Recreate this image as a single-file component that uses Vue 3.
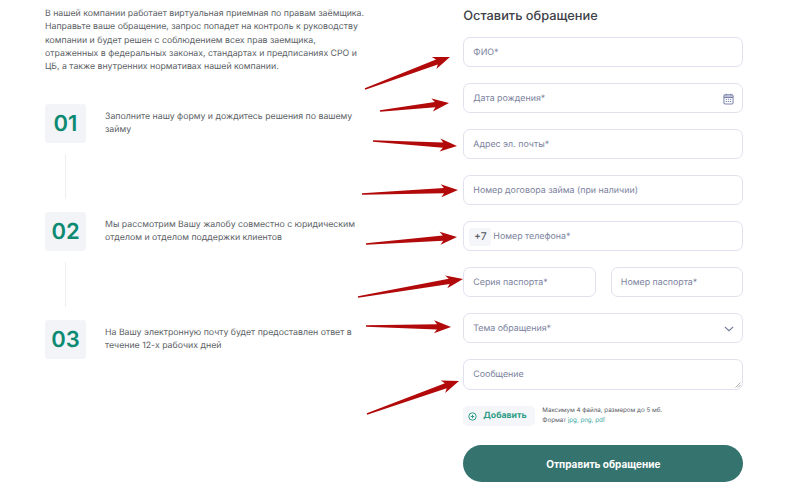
<script setup>
const steps = [
  { n: '01', text: 'Заполните нашу форму и дождитесь решения по вашему займу' },
  { n: '02', text: 'Мы рассмотрим Вашу жалобу совместно с юридическим отделом и отделом поддержки клиентов' },
  { n: '03', text: 'На Вашу электронную почту будет предоставлен ответ в течение 12-х рабочих дней' },
]
const lines = [
  [365, 89, 450, 57], [380, 111, 449, 103], [373, 141, 457, 146], [362, 194, 458, 190],
  [366, 244, 457, 237], [358, 297, 463, 279], [366, 326, 451, 327], [367, 414, 459, 381],
]
function arrow([x1, y1, x2, y2]) {
  const dx = x2 - x1, dy = y2 - y1, l = Math.hypot(dx, dy)
  const ux = dx / l, uy = dy / l, nx = -uy, ny = ux
  const at = (d, w) => `${(x1 + ux * d + nx * w).toFixed(1)},${(y1 + uy * d + ny * w).toFixed(1)}`
  const h = l - 14
  return [at(0, 0.7), at(h, 2.6), at(l - 17, 6.5), at(l, 0), at(l - 17, -6.5), at(h, -2.6), at(0, -0.7)].join(' ')
}
const arrows = lines.map(arrow)
</script>

<template>
  <div class="page">
    <section class="info">
      <p class="intro">В нашей компании работает виртуальная приемная по правам заёмщика. Направьте ваше обращение, запрос попадет на контроль к руководству компании и будет решен с соблюдением всех прав заемщика, отраженных в федеральных законах, стандартах и предписаниях СРО и ЦБ, а также внутренних нормативах нашей компании.</p>
      <div class="steps">
        <template v-for="(s, i) in steps" :key="s.n">
          <div class="step">
            <div class="num">{{ s.n }}</div>
            <p class="step-text">{{ s.text }}</p>
          </div>
          <div v-if="i < steps.length - 1" class="link"></div>
        </template>
      </div>
    </section>

    <form class="form" @submit.prevent>
      <h2 class="title">Оставить обращение</h2>
      <div class="field">ФИО*</div>
      <div class="field spread">
        <span>Дата рождения*</span>
        <svg class="cal" width="11" height="12" viewBox="0 0 12 13" fill="none">
          <rect x="1" y="2" width="10" height="10" rx="1.3" stroke="#7d84ab" stroke-width="1.1"/>
          <path d="M1 4.6h10" stroke="#7d84ab" stroke-width="1.6"/>
          <path d="M3.5.8v2M8.5.8v2" stroke="#7d84ab" stroke-width="1.1"/>
          <path d="M3 6.8h1.4M5.3 6.8h1.4M7.6 6.8H9M3 9.2h1.4M5.3 9.2h1.4M7.6 9.2H9" stroke="#7d84ab" stroke-width="1.2"/>
        </svg>
      </div>
      <div class="field">Адрес эл. почты*</div>
      <div class="field">Номер договора займа (при наличии)</div>
      <div class="field phone"><span class="code">+7</span><span>Номер телефона*</span></div>
      <div class="pair">
        <div class="field">Серия паспорта*</div>
        <div class="field">Номер паспорта*</div>
      </div>
      <div class="field spread">
        <span>Тема обращения*</span>
        <svg class="chev" width="10" height="6" viewBox="0 0 12 7" fill="none">
          <path d="M1 1l5 4.6L11 1" stroke="#6f7798" stroke-width="1.3"/>
        </svg>
      </div>
      <div class="field area">
        Сообщение
        <svg class="grip" width="6" height="6" viewBox="0 0 6 6" fill="none">
          <path d="M5.5.5l-5 5M5.5 3l-2.5 2.5" stroke="#8a8a8a" stroke-width=".7"/>
        </svg>
      </div>
      <div class="attach">
        <div class="add">
          <svg width="9" height="9" viewBox="0 0 9 9" fill="none">
            <circle cx="4.5" cy="4.5" r="3.7" stroke="#2f9c86" stroke-width="1"/>
            <path d="M2.8 4.5h3.4M4.5 2.8v3.4" stroke="#2f9c86" stroke-width="1"/>
          </svg>
          <span>Добавить</span>
        </div>
        <div class="hint">
          <div>Максимум 4 файла, размером до 5 мб.</div>
          <div>Формат <span class="ext">jpg, png, pdf</span></div>
        </div>
      </div>
      <button class="send" type="submit">Отправить обращение</button>
    </form>

    <svg class="arrows" width="800" height="487" viewBox="0 0 800 487">
      <polygon v-for="(p, i) in arrows" :key="i" :points="p" fill="#b20a0a"/>
    </svg>
  </div>
</template>

<style>
html, body { margin: 0; background: #fff; }
</style>

<style scoped>
.page {
  position: relative;
  width: 800px;
  height: 487px;
  overflow: hidden;
  display: flex;
  box-sizing: border-box;
  padding: 0 56.7px 0 45px;
  justify-content: space-between;
  font-family: Inter, "Noto Sans", sans-serif;
  text-rendering: geometricPrecision;
  background: #fff;
}
.info { width: 324px; padding-top: 8px; }
.intro {
  margin: 0;
  font-size: 8.75px;
  line-height: 13.25px;
  color: #5c5f66;
}
.steps { margin-top: 29.5px; }
.step { display: flex; height: 39px; }
.num {
  flex: none;
  width: 41px;
  height: 39px;
  border-radius: 3px;
  background: #f2f4f8;
  color: #0d8a72;
  font-size: 22px;
  font-weight: 600;
  line-height: 40px;
  text-align: center;
}
.step-text {
  margin: 7px 0 0 19px;
  font-size: 8.75px;
  line-height: 13.25px;
  color: #5c5f66;
}
.link {
  width: 1px;
  height: 45px;
  margin: 11px 0 13px 20px;
  background: #eeeff3;
}
.form { width: 280px; display: flex; flex-direction: column; }
.title {
  margin: 0;
  padding-top: 8.6px;
  height: 37.3px;
  flex: none;
  box-sizing: border-box;
  font-size: 12.8px;
  line-height: 16px;
  font-weight: 500;
  color: #3d4047;
}
.field {
  box-sizing: border-box;
  height: 30px;
  flex: none;
  margin-bottom: 16px;
  padding: 1px 9px 0;
  border: 1px solid #dfe2ee;
  border-radius: 7px;
  display: flex;
  align-items: center;
  font-size: 8.85px;
  color: #7a7f9c;
  background: #fff;
}
.spread { justify-content: space-between; }
.spread svg { margin-right: -1px; }
.phone { padding-left: 5px; gap: 2px; }
.code {
  width: 22px;
  height: 18px;
  border-radius: 3px;
  background: #f5f6f9;
  color: #4d5058;
  font-size: 10.5px;
  line-height: 18px;
  text-align: center;
}
.pair { display: flex; justify-content: space-between; }
.pair .field { width: 132.5px; }
.area {
  position: relative;
  height: 31px;
  margin-bottom: 16px;
  padding-top: 0;
}
.grip { position: absolute; right: 1px; bottom: 1px; }
.attach { display: flex; align-items: center; gap: 7px; height: 20px; }
.add {
  width: 72px;
  height: 20px;
  box-sizing: border-box;
  border-radius: 5px;
  background: #f5f6fa;
  display: flex;
  align-items: center;
  gap: 6px;
  padding-left: 5px;
  color: #2f9c86;
  font-size: 8.7px;
  font-weight: 700;
}
.hint { font-size: 6.2px; line-height: 10px; color: #55585f; }
.ext { color: #3aa6a0; }
.send {
  margin-top: 19px;
  height: 36.7px;
  flex: none;
  border: none;
  border-radius: 19px;
  background: #35736e;
  color: #fff;
  font-family: inherit;
  font-size: 10px;
  font-weight: 700;
}
.arrows { position: absolute; inset: 0; pointer-events: none; }
</style>
